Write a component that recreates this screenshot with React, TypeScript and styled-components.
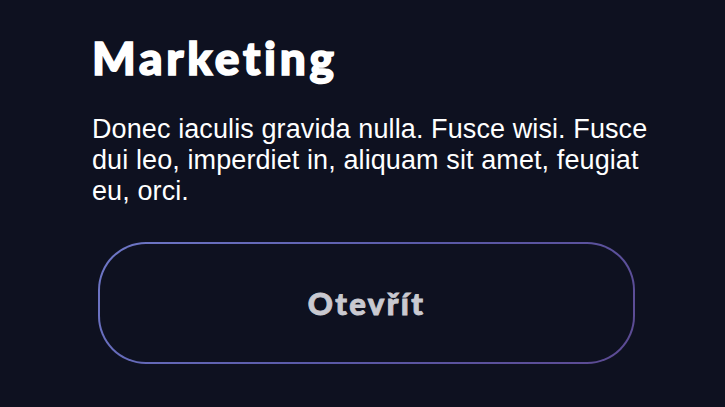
import React from "react";
import styled, { createGlobalStyle } from "styled-components";

const bgColor = "#0e1120";

const GlobalStyle = createGlobalStyle`
  html, body {
    margin: 0;
    padding: 0;
    background: ${bgColor};
  }
`;

const Page = styled.div`
  width: 725px;
  height: 407px;
  box-sizing: border-box;
  padding: 30px 0 0 92px;
  background: ${bgColor};
  display: flex;
  flex-direction: column;
  overflow: hidden;
`;

const Title = styled.h1`
  margin: 0;
  font-family: Lato, "Noto Sans", sans-serif;
  font-weight: 900;
  font-size: 46px;
  line-height: 56px;
  letter-spacing: 3.7px;
  font-variant-ligatures: none;
  -webkit-text-stroke: 1.6px #ffffff;
  color: #ffffff;
`;

const Text = styled.p`
  margin: 28px 0 0;
  width: 575px;
  font-family: "Liberation Sans", Arial, sans-serif;
  font-size: 27px;
  line-height: 31px;
  letter-spacing: 0.1px;
  color: #ffffff;
`;

const ButtonFrame = styled.div`
  margin: 35px 0 0 6px;
  width: 537px;
  height: 122px;
  box-sizing: border-box;
  padding: 2px;
  border-radius: 48px;
  background: linear-gradient(135deg, #6f78c8 0%, #5a5aa8 50%, #5c4a92 100%);
  display: flex;
`;

const Button = styled.button`
  flex: 1;
  border: none;
  border-radius: 46px;
  background: ${bgColor};
  font-family: Lato, "Noto Sans", sans-serif;
  font-weight: 900;
  font-size: 31px;
  letter-spacing: 2.4px;
  font-variant-ligatures: none;
  -webkit-text-stroke: 0.9px #c9c9d0;
  color: #c9c9d0;
  cursor: pointer;
`;

const App: React.FC = () => {
  return (
    <>
      <GlobalStyle />
      <Page>
        <Title>Marketing</Title>
        <Text>
          Donec iaculis gravida nulla. Fusce wisi. Fusce dui leo, imperdiet in,
          aliquam sit amet, feugiat eu, orci.
        </Text>
        <ButtonFrame>
          <Button>Otevřít</Button>
        </ButtonFrame>
      </Page>
    </>
  );
};

export default App;
